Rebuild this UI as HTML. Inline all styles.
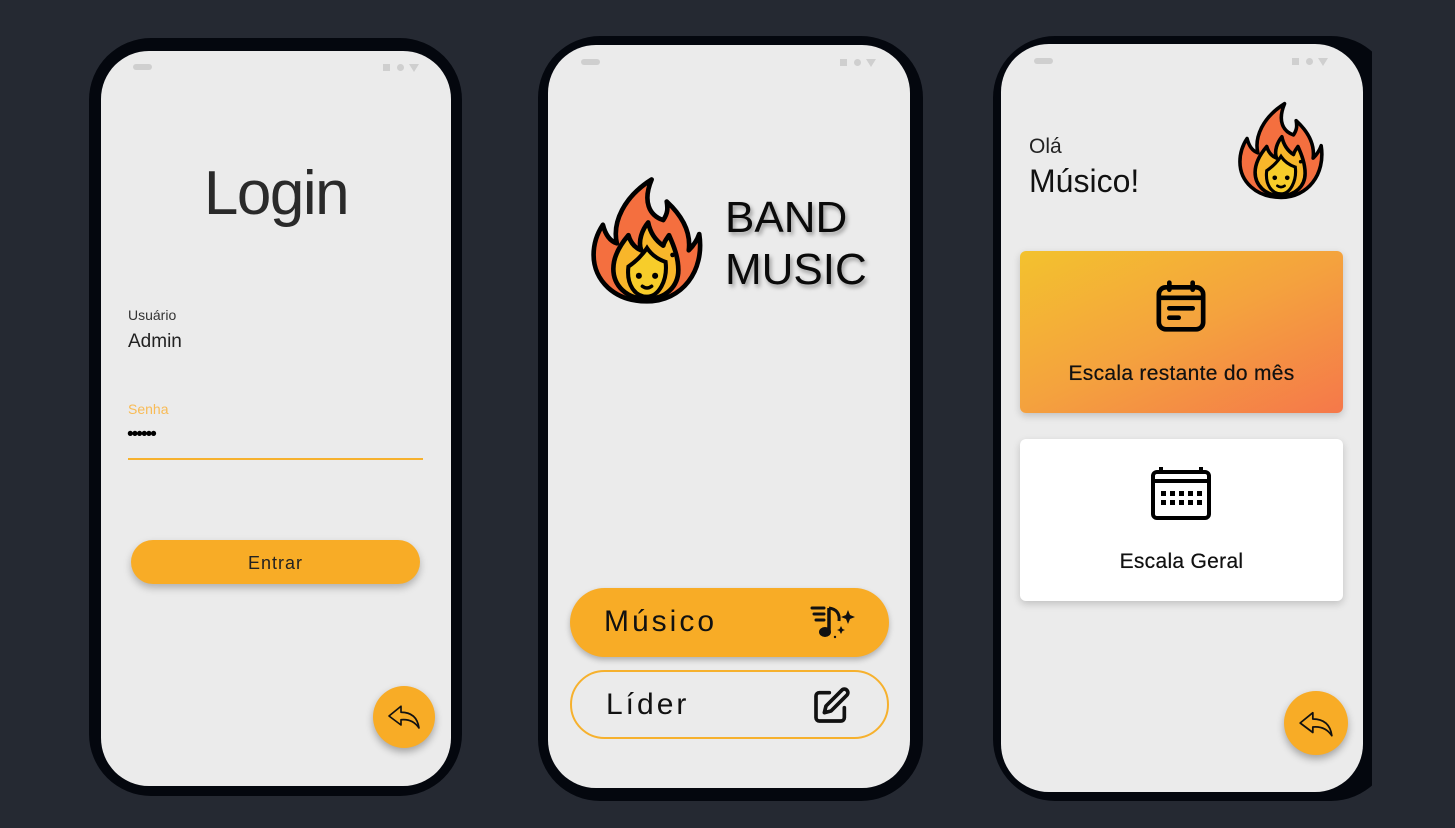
<!DOCTYPE html>
<html><head><meta charset="utf-8"><style>
*{margin:0;padding:0;box-sizing:border-box}
body{width:1455px;height:828px;background:#252932;position:relative;overflow:hidden;font-family:"Liberation Sans",Arial,sans-serif;color:#111}
.a{position:absolute}
.frame{position:absolute;background:#04070e;border-radius:62px}
.screen{position:absolute;background:#ebebeb;border-radius:48px;overflow:hidden}
.pill{position:absolute;width:19px;height:6px;border-radius:3px;background:#cfcfcf}
.sq{position:absolute;width:7px;height:7px;background:#cfcfcf}
.ci{position:absolute;width:7px;height:7px;border-radius:50%;background:#cfcfcf}
.tri{position:absolute;width:0;height:0;border-left:5px solid transparent;border-right:5px solid transparent;border-top:8px solid #cfcfcf}
.fab{position:absolute;border-radius:50%;background:#f8ac26;box-shadow:0 4px 8px rgba(0,0,0,.3)}
.card{position:absolute;border-radius:6px;box-shadow:0 3px 8px rgba(0,0,0,.18)}
.ct{text-shadow:0 0 .4px #111}
</style></head><body>
<svg width="0" height="0" style="position:absolute">
<defs>
<symbol id="flame" viewBox="0 0 100 112">
<path d="M50 108 C22 108 4 90 4 68 C4 56 8 48 12 42 C14 50 18 56 24 58 C20 40 30 18 54 3 C46 22 52 34 64 38 C68 32 68 28 67 22 C80 34 88 48 86 64 C90 60 93 56 95 50 C100 82 80 108 50 108 Z" fill="#f46f3f" stroke="#000" stroke-width="4" stroke-linejoin="round"/>
<path d="M50 106 C32 106 21 94 21 80 C21 68 28 58 34 51 C36 58 40 62 45 64 C42 56 46 46 51 40 C53 50 58 56 64 60 C65 56 67 54 69 51 C73 60 77 70 77 81 C77 95 66 106 50 106 Z" fill="#f8b62a" stroke="#000" stroke-width="4" stroke-linejoin="round"/>
<path d="M34 78 C40 74 46 68 50 62 C54 68 60 72 66 74 C68 90 60 104 50 104 C40 104 32 94 34 78 Z" fill="#f7cd2a" stroke="#000" stroke-width="3.5"/>
<circle cx="43" cy="86" r="2.6"/><circle cx="57" cy="86" r="2.6"/>
<path d="M46 95 Q50 98 54 95" stroke="#000" stroke-width="3" fill="none" stroke-linecap="round"/>
<circle cx="72" cy="68" r="2"/>
</symbol>
<symbol id="reply" viewBox="0 0 24 24">
<path d="M10 5.5 L2 12 L10 18 L10 14.5 C15 14 19 15.5 22 20 C21 13 17 9.5 10 9.5 Z" fill="none" stroke="#111" stroke-width="1.1" stroke-linejoin="round"/>
</symbol>
</defs></svg>

<!-- Phone 1 -->
<div class="frame" style="left:89px;top:38px;width:373px;height:758px"></div>
<div class="screen" style="left:101px;top:51px;width:350px;height:735px">
<div class="pill" style="left:32px;top:13px"></div>
<div class="sq" style="left:282px;top:13px"></div><div class="ci" style="left:296px;top:13px"></div><div class="tri" style="left:308px;top:13px"></div>
</div>
<div class="a" style="left:130px;top:158px;width:292px;text-align:center;font-size:62px;font-weight:300;color:#2a2a2a;letter-spacing:-1.5px">Login</div>
<div class="a" style="left:128px;top:307px;font-size:14px;color:#333">Usuário</div>
<div class="a" style="left:128px;top:331px;font-size:19px;color:#222">Admin</div>
<div class="a" style="left:128px;top:401px;font-size:14px;color:#f8bb55">Senha</div>
<div class="a" style="left:127px;top:424px;font-size:19px;color:#000;letter-spacing:-2px">••••••</div>
<div class="a" style="left:128px;top:458px;width:295px;height:2px;background:#f6b12e"></div>
<div class="a" style="left:131px;top:540px;width:289px;height:44px;border-radius:22px;background:#f8ac26;box-shadow:0 4px 8px rgba(0,0,0,.25);text-align:center;line-height:46px;font-size:18px;letter-spacing:1px;color:#222">Entrar</div>
<div class="fab" style="left:373px;top:686px;width:62px;height:62px"><svg style="position:absolute;left:13px;top:12px" width="36" height="36"><use href="#reply"/></svg></div>

<!-- Phone 2 -->
<div class="frame" style="left:538px;top:36px;width:385px;height:765px"></div>
<div class="screen" style="left:548px;top:45px;width:362px;height:743px">
<div class="pill" style="left:33px;top:14px"></div>
<div class="sq" style="left:292px;top:14px"></div><div class="ci" style="left:306px;top:14px"></div><div class="tri" style="left:318px;top:14px"></div>
</div>
<svg class="a" style="left:588px;top:176px" width="118" height="130"><use href="#flame"/></svg>
<div class="a" style="left:725px;top:192px;font-size:44px;line-height:52px;color:#0a0a0a;text-shadow:2px 3px 4px rgba(0,0,0,.35)">BAND<br>MUSIC</div>
<div class="a" style="left:570px;top:588px;width:319px;height:69px;border-radius:35px;background:#f8ac26;box-shadow:0 3px 6px rgba(0,0,0,.25)"></div>
<div class="a" style="left:604px;top:605px;font-size:30px;letter-spacing:3px;color:#111">Músico</div>
<svg class="a" style="left:810px;top:604px" width="46" height="36" viewBox="0 0 46 36">
<g stroke="#111" stroke-width="3" stroke-linecap="round"><line x1="2" y1="4" x2="14" y2="4"/><line x1="4" y1="10" x2="14" y2="10"/><line x1="6" y1="16" x2="14" y2="16"/></g>
<path d="M19 4 L19 27" stroke="#111" stroke-width="3.5"/><path d="M19 4 C26 5 30 9 29 17" stroke="#111" stroke-width="3" fill="none"/>
<ellipse cx="15" cy="28" rx="6" ry="5" fill="#111"/>
<path d="M38 6 L40 11 L45 13 L40 15 L38 20 L36 15 L31 13 L36 11 Z" fill="#111"/>
<path d="M31 22 L32.5 25 L35 26 L32.5 27 L31 30 L29.5 27 L27 26 L29.5 25 Z" fill="#111"/>
<circle cx="25" cy="33" r="1.2" fill="#111"/></svg>
<div class="a" style="left:570px;top:670px;width:319px;height:69px;border-radius:35px;border:2px solid #f6b12e"></div>
<div class="a" style="left:606px;top:688px;font-size:30px;letter-spacing:3px;color:#111">Líder</div>
<svg class="a" style="left:811px;top:686px" width="40" height="40" viewBox="0 0 24 24" fill="none" stroke="#111" stroke-width="2.2" stroke-linecap="round" stroke-linejoin="round">
<path d="M11 4H5a2 2 0 0 0-2 2v13a2 2 0 0 0 2 2h13a2 2 0 0 0 2-2v-6"/><path d="M18.5 2.5a2.1 2.1 0 0 1 3 3L12 15l-4 1 1-4 9.5-9.5z"/></svg>

<!-- Phone 3 -->
<div class="frame" style="left:993px;top:36px;width:400px;height:765px"></div>
<div class="a" style="left:1372px;top:0;width:83px;height:828px;background:#252932"></div>
<div class="screen" style="left:1001px;top:44px;width:362px;height:748px">
<div class="pill" style="left:33px;top:14px"></div>
<div class="sq" style="left:291px;top:14px"></div><div class="ci" style="left:305px;top:14px"></div><div class="tri" style="left:317px;top:14px"></div>
</div>
<div class="a" style="left:1029px;top:135px;font-size:21px;color:#222">Olá</div>
<div class="a" style="left:1029px;top:163px;font-size:32px;color:#111">Músico!</div>
<svg class="a" style="left:1236px;top:101px" width="90" height="100"><use href="#flame"/></svg>
<div class="card" style="left:1020px;top:251px;width:323px;height:162px;background:linear-gradient(155deg,#f3c22e 0%,#f4a23e 50%,#f5784a 100%)"></div>
<svg class="a" style="left:1153px;top:278px" width="56" height="56" viewBox="0 0 24 24" fill="none" stroke="#000" stroke-width="2" stroke-linecap="round">
<rect x="2.5" y="4" width="19" height="18" rx="3"/><line x1="7" y1="2" x2="7" y2="5"/><line x1="17" y1="2" x2="17" y2="5"/><line x1="2.5" y1="8.5" x2="21.5" y2="8.5"/><line x1="7" y1="13" x2="17" y2="13"/><line x1="7" y1="17" x2="11" y2="17"/></svg>
<div class="a ct" style="left:1020px;top:362px;width:323px;text-align:center;font-size:21px;letter-spacing:.3px;color:#111">Escala restante do mês</div>
<div class="card" style="left:1020px;top:439px;width:323px;height:162px;background:#fff"></div>
<svg class="a" style="left:1150px;top:466px" width="62" height="56" viewBox="0 0 62 56" fill="none" stroke="#000" stroke-width="4">
<rect x="3" y="6" width="56" height="46" rx="4"/><line x1="3" y1="15" x2="59" y2="15"/><line x1="11" y1="1" x2="11" y2="7"/><line x1="51" y1="1" x2="51" y2="7"/>
<g fill="#000" stroke="none"><rect x="11" y="25" width="5" height="5"/><rect x="20" y="25" width="5" height="5"/><rect x="29" y="25" width="5" height="5"/><rect x="38" y="25" width="5" height="5"/><rect x="47" y="25" width="5" height="5"/><rect x="11" y="34" width="5" height="5"/><rect x="20" y="34" width="5" height="5"/><rect x="29" y="34" width="5" height="5"/><rect x="38" y="34" width="5" height="5"/><rect x="47" y="34" width="5" height="5"/></g></svg>
<div class="a ct" style="left:1020px;top:550px;width:323px;text-align:center;font-size:21px;letter-spacing:.3px;color:#111">Escala Geral</div>
<div class="fab" style="left:1284px;top:691px;width:64px;height:64px"><svg style="position:absolute;left:13px;top:13px" width="38" height="38"><use href="#reply"/></svg></div>
</body></html>
